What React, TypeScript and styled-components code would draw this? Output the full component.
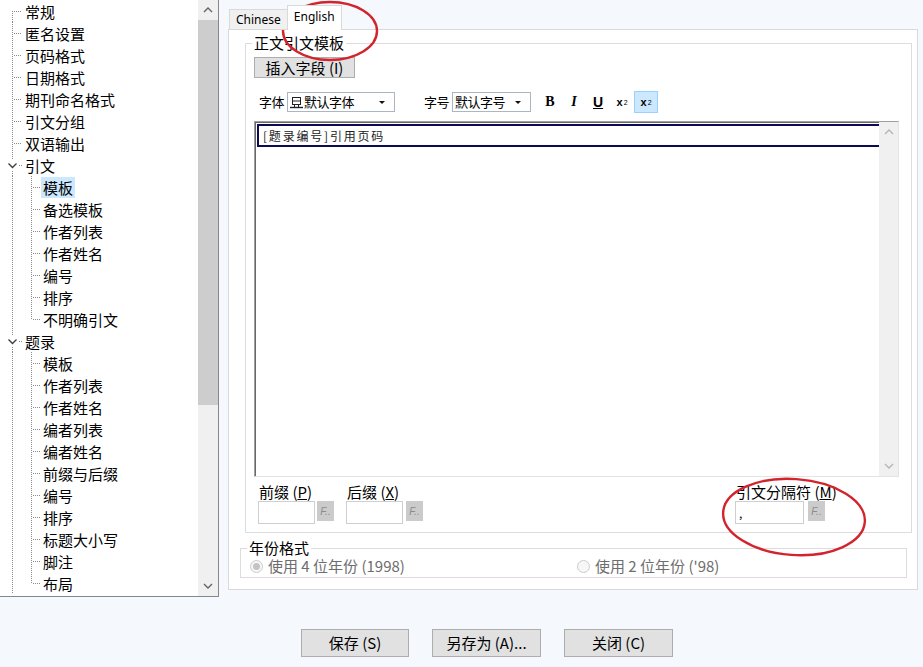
import React from 'react'
import styled, { createGlobalStyle } from 'styled-components'

const GlobalStyle = createGlobalStyle`
  html, body {
    margin: 0;
    padding: 0;
    background: #f5f8fc;
  }
  body {
    font-family: 'Noto Sans CJK SC', 'Noto Sans', sans-serif;
    color: #000;
  }
  * {
    box-sizing: border-box;
  }
`

interface ITreeNode {
    label: string,
    children?: string[],
}

interface ITreeRow {
    label: string,
    level: 0 | 1,
    first?: boolean,
    last?: boolean,
    expander?: boolean,
    selected?: boolean,
}

const treeData: ITreeNode[] = [
    { label: '常规' },
    { label: '匿名设置' },
    { label: '页码格式' },
    { label: '日期格式' },
    { label: '期刊命名格式' },
    { label: '引文分组' },
    { label: '双语输出' },
    { label: '引文', children: ['模板', '备选模板', '作者列表', '作者姓名', '编号', '排序', '不明确引文'] },
    { label: '题录', children: ['模板', '作者列表', '作者姓名', '编者列表', '编者姓名', '前缀与后缀', '编号', '排序', '标题大小写', '脚注', '布局'] },
]

const treeRows: ITreeRow[] = []
treeData.forEach((node, i) => {
    treeRows.push({ label: node.label, level: 0, first: i === 0, expander: !!node.children })
    const kids = node.children ?? []
    kids.forEach((kid, j) => {
        treeRows.push({
            label: kid,
            level: 1,
            last: j === kids.length - 1,
            selected: node.label === '引文' && j === 0,
        })
    })
})

const Connector = ({ row }: { row: ITreeRow }) => {
    const w = row.level === 0 ? 23 : 41
    return (
        <Guide width={w} height={22} viewBox={`0 0 ${w} 22`}>
            {row.level === 0 && !row.expander && (
                <>
                    <line x1="12.5" y1={row.first ? 11 : 0} x2="12.5" y2="22" />
                    <line x1="14" y1="11.5" x2="22" y2="11.5" />
                </>
            )}
            {row.level === 0 && row.expander && (
                <>
                    <line x1="12.5" y1="0" x2="12.5" y2="6" />
                    <line x1="12.5" y1="17" x2="12.5" y2="22" />
                    <line x1="19" y1="11.5" x2="22" y2="11.5" />
                    <path className="chevron" d="M8.5 9.5 L12.5 13.5 L16.5 9.5" />
                </>
            )}
            {row.level === 1 && (
                <>
                    <line x1="12.5" y1="0" x2="12.5" y2="22" />
                    <line x1="31.5" y1="0" x2="31.5" y2={row.last ? 12 : 22} />
                    <line x1="33" y1="11.5" x2="41" y2="11.5" />
                </>
            )}
        </Guide>
    )
}

const Arrow = ({ up, color }: { up?: boolean, color: string }) => (
    <svg width="10" height="6" viewBox="0 0 10 6">
        <path
            d={up ? 'M1 5 L5 1 L9 5' : 'M1 1 L5 5 L9 1'}
            fill="none"
            stroke={color}
            strokeWidth="1.3"
        />
    </svg>
)

// little TrueType "printer" glyph shown before the font name
const FontIcon = () => (
    <svg width="13" height="13" viewBox="0 0 13 13">
        <rect x="2.5" y="1.5" width="8" height="7" fill="none" stroke="#222" />
        <line x1="2.5" y1="5" x2="10.5" y2="5" stroke="#222" />
        <line x1="4.5" y1="8.5" x2="4.5" y2="11" stroke="#222" />
        <line x1="8.5" y1="8.5" x2="8.5" y2="11" stroke="#222" />
        <line x1="0" y1="11.5" x2="13" y2="11.5" stroke="#222" strokeWidth="1.4" />
    </svg>
)

const Caret = () => (
    <svg width="6" height="3" viewBox="0 0 6 3">
        <path d="M0 0 L6 0 L3 3 Z" fill="#111" />
    </svg>
)

const Field = ({ label, hotkey, value, inputWidth, gap }: { label: string, hotkey: string, value?: string, inputWidth: number, gap: number }) => (
    <FieldGroup>
        <FieldLabel>{label} (<u>{hotkey}</u>)</FieldLabel>
        <FieldInputs>
            <TextInput $width={inputWidth}>{value}</TextInput>
            <FormatButton $gap={gap}>F..</FormatButton>
        </FieldInputs>
    </FieldGroup>
)

export default function App() {
    return (
        <Root>
            <GlobalStyle />
            <Main>
                <TreePanel>
                    <TreeList>
                        {treeRows.map((row, i) => (
                            <TreeRow key={i}>
                                <Connector row={row} />
                                <TreeLabel $selected={row.selected}>{row.label}</TreeLabel>
                            </TreeRow>
                        ))}
                    </TreeList>
                    <ScrollBar>
                        <ScrollArrow><Arrow up color="#606060" /></ScrollArrow>
                        <ScrollTrack>
                            <ScrollThumb $size={385} />
                        </ScrollTrack>
                        <ScrollArrow><Arrow color="#606060" /></ScrollArrow>
                    </ScrollBar>
                </TreePanel>

                <RightPane>
                    <TabStrip>
                        <Tab>Chinese</Tab>
                        <Tab $active>English</Tab>
                    </TabStrip>
                    <TabPanel>
                        <Group $left={5} $bottom={8}>
                            <GroupTitle $after={5}>正文引文模板</GroupTitle>
                            <PushButton $width={101} $height={21}>插入字段 (I)</PushButton>

                            <Toolbar>
                                <ToolLabel>字体</ToolLabel>
                                <Select $width={108}>
                                    <FontIcon />
                                    <SelectText>默认字体</SelectText>
                                    <Caret />
                                </Select>
                                <ToolLabel $gap={29}>字号</ToolLabel>
                                <Select $width={79}>
                                    <SelectText>默认字号</SelectText>
                                    <Caret />
                                </Select>
                                <ToolButtons>
                                    <ToolButton>B</ToolButton>
                                    <ToolButton $italic>I</ToolButton>
                                    <ToolButton $sans><u>U</u></ToolButton>
                                    <ToolButton $sans $small>x<sub>2</sub></ToolButton>
                                    <ToolButton $sans $small $active>x<sup>2</sup></ToolButton>
                                </ToolButtons>
                            </Toolbar>

                            <Editor>
                                <EditorBody>
                                    <FieldLine>[题录编号]引用页码</FieldLine>
                                </EditorBody>
                                <ScrollBar $plain>
                                    <ScrollArrow><Arrow up color="#b4b4b4" /></ScrollArrow>
                                    <ScrollTrack />
                                    <ScrollArrow><Arrow color="#b4b4b4" /></ScrollArrow>
                                </ScrollBar>
                            </Editor>

                            <FieldRow>
                                <Field label="前缀" hotkey="P" inputWidth={57} gap={2} />
                                <Field label="后缀" hotkey="X" inputWidth={57} gap={3} />
                                <Spacer />
                                <Field label="引文分隔符" hotkey="M" value="," inputWidth={69} gap={4} />
                            </FieldRow>
                        </Group>

                        <Group $top={15} $right={5} $bottom={2}>
                            <GroupTitle>年份格式</GroupTitle>
                            <RadioRow>
                                <Radio>
                                    <RadioDot $checked />
                                    使用 4 位年份 (1998)
                                </Radio>
                                <Radio>
                                    <RadioDot />
                                    使用 2 位年份 ('98)
                                </Radio>
                            </RadioRow>
                        </Group>
                    </TabPanel>
                </RightPane>
            </Main>

            <Footer>
                <PushButton $width={108} $height={28}>保存 (S)</PushButton>
                <PushButton $width={109} $height={28}>另存为 (A)...</PushButton>
                <PushButton $width={109} $height={28}>关闭 (C)</PushButton>
            </Footer>

            <Annotations width="923" height="667" viewBox="0 0 923 667">
                <ellipse cx="330" cy="31" rx="47" ry="29" />
                <ellipse cx="794" cy="517" rx="71" ry="38" transform="rotate(4 794 517)" />
            </Annotations>
        </Root>
    )
}

const Root = styled.div`
    position: relative;
    width: 923px;
    height: 667px;
    overflow: hidden;
    background: #f5f8fc;
`

const Main = styled.div`
    display: flex;
    height: 597px;
`

const TreePanel = styled.div`
    width: 219px;
    display: flex;
    background: #fff;
    border-right: 1px solid #828790;
    border-bottom: 1px solid #828790;
`

const TreeList = styled.div`
    flex: 1;
    overflow: hidden;
`

const TreeRow = styled.div`
    display: flex;
    align-items: center;
    height: 22px;
`

const Guide = styled.svg`
    flex: none;
    shape-rendering: crispEdges;

    line {
        stroke: #8a8a8a;
        stroke-width: 1;
        stroke-dasharray: 1 1;
    }

    .chevron {
        fill: none;
        stroke: #3c3c3c;
        stroke-width: 1.3;
        shape-rendering: geometricPrecision;
    }
`

const TreeLabel = styled.span<{ $selected?: boolean }>`
    padding: 0 2px;
    font-size: 15px;
    line-height: 21px;
    white-space: nowrap;
    background: ${p => p.$selected ? '#cce8ff' : 'transparent'};
`

const ScrollBar = styled.div<{ $plain?: boolean }>`
    width: ${p => p.$plain ? 19 : 20}px;
    flex: none;
    display: flex;
    flex-direction: column;
    background: #f0f0f0;
`

const ScrollArrow = styled.div`
    height: 20px;
    display: flex;
    align-items: center;
    justify-content: center;
`

const ScrollTrack = styled.div`
    flex: 1;
`

const ScrollThumb = styled.div<{ $size: number }>`
    height: ${p => p.$size}px;
    background: #cdcdcd;
`

const RightPane = styled.div`
    flex: 1;
    padding: 5px 5px 0 9px;
`

const TabStrip = styled.div`
    position: relative;
    z-index: 1;
    display: flex;
    align-items: flex-end;
    height: 25px;
    margin-bottom: -1px;
    padding-left: 1px;
`

const Tab = styled.div<{ $active?: boolean }>`
    height: ${p => p.$active ? 25 : 21}px;
    margin-left: ${p => p.$active ? -1 : 0}px;
    padding: ${p => p.$active ? '2px 6px 0 6px' : '1px 6px 0 6px'};
    font-family: 'Noto Sans', 'Liberation Sans', sans-serif;
    font-size: 12px;
    line-height: 18px;
    background: ${p => p.$active ? '#fff' : '#f0f0f0'};
    border: 1px solid #d9d9d9;
    border-bottom: ${p => p.$active ? 'none' : '1px solid #d9d9d9'};
`

const TabPanel = styled.div`
    height: 561px;
    padding: 13px 5px 0 11px;
    background: #fff;
    border: 1px solid #d9d9d9;
`

const Group = styled.div<{ $left?: number, $right?: number, $top?: number, $bottom: number }>`
    margin: ${p => p.$top ?? 0}px ${p => p.$right ?? 0}px 0 ${p => p.$left ?? 0}px;
    padding: 0 12px ${p => p.$bottom}px 8px;
    border: 1px solid #dcdcdc;
`

// caption sits on the group's top border line
const GroupTitle = styled.div<{ $after?: number }>`
    width: fit-content;
    height: 18px;
    margin: -10px 0 ${p => p.$after ?? 0}px -2px;
    padding: 0 2px;
    font-size: 15px;
    line-height: 18px;
    background: #fff;
`

const PushButton = styled.div<{ $width: number, $height: number }>`
    width: ${p => p.$width}px;
    height: ${p => p.$height}px;
    display: flex;
    align-items: center;
    justify-content: center;
    font-size: 15px;
    line-height: 18px;
    background: #e1e1e1;
    border: 1px solid #adadad;
    white-space: nowrap;
`

const Toolbar = styled.div`
    display: flex;
    align-items: center;
    height: 22px;
    margin-top: 13px;
    padding-left: 5px;
`

const ToolLabel = styled.span<{ $gap?: number }>`
    margin-left: ${p => p.$gap ?? 0}px;
    margin-right: 3px;
    font-size: 13px;
    letter-spacing: -0.5px;
    line-height: 18px;
    white-space: nowrap;
`

const Select = styled.div<{ $width: number }>`
    width: ${p => p.$width}px;
    height: 20px;
    flex: none;
    display: flex;
    align-items: center;
    gap: 1px;
    padding: 0 9px 0 2px;
    background: #fff;
    border: 1px solid #a9b6c4;
`

const SelectText = styled.span`
    flex: 1;
    font-size: 13px;
    letter-spacing: -0.5px;
    line-height: 18px;
    white-space: nowrap;
`

const ToolButtons = styled.div`
    display: flex;
    margin-left: 7px;
`

const ToolButton = styled.span<{ $active?: boolean, $italic?: boolean, $sans?: boolean, $small?: boolean }>`
    width: 24px;
    height: 22px;
    display: flex;
    align-items: center;
    justify-content: center;
    font-family: ${p => p.$sans ? "'Liberation Sans', sans-serif" : "'Liberation Serif', serif"};
    font-size: ${p => p.$small ? 11 : 14}px;
    font-weight: bold;
    font-style: ${p => p.$italic ? 'italic' : 'normal'};
    background: ${p => p.$active ? '#cce8ff' : 'transparent'};
    border: 1px solid ${p => p.$active ? '#99d1ff' : 'transparent'};

    sub, sup {
        font-size: 7px;
        font-weight: normal;
        margin-left: 1px;
    }
`

const Editor = styled.div`
    display: flex;
    height: 356px;
    margin-top: 8px;
    background: #fff;
    border: 1px solid;
    border-color: #a0a0a0 #e3e3e3 #e3e3e3 #a0a0a0;
    box-shadow: inset 1px 1px 0 #696969;
`

const EditorBody = styled.div`
    flex: 1;
    padding: 2px 0 0 2px;
`

const FieldLine = styled.div`
    height: 23px;
    padding-left: 4px;
    font-size: 12px;
    line-height: 19px;
    letter-spacing: 1.8px;
    color: #222;
    border: 2px solid #0b0b55;
    border-right: none;
`

const FieldRow = styled.div`
    display: flex;
    gap: 12px;
    margin-top: 6px;
    padding: 0 74px 0 4px;
`

const Spacer = styled.div`
    flex: 1;
`

const FieldGroup = styled.div`
    display: flex;
    flex-direction: column;
`

const FieldLabel = styled.span`
    width: 0;
    height: 18px;
    padding-left: 1px;
    overflow: visible;
    font-size: 15px;
    line-height: 18px;
    white-space: nowrap;
`

const FieldInputs = styled.div`
    display: flex;
    align-items: flex-start;
`

const TextInput = styled.div<{ $width: number }>`
    width: ${p => p.$width}px;
    height: 23px;
    padding: 2px 0 0 3px;
    font-size: 12px;
    line-height: 18px;
    background: #fff;
    border: 1px solid #cfcfcf;
`

const FormatButton = styled.div<{ $gap: number }>`
    width: 17px;
    height: 20px;
    margin-left: ${p => p.$gap}px;
    display: flex;
    align-items: center;
    justify-content: center;
    font-family: 'Liberation Sans', sans-serif;
    font-size: 10px;
    font-style: italic;
    color: #8c8c8c;
    background: #cbcbcb;
`

const RadioRow = styled.div`
    display: grid;
    grid-template-columns: 327px auto;
    height: 18px;
    padding-left: 1px;
`

const Radio = styled.label`
    display: flex;
    align-items: center;
    gap: 5px;
    font-size: 15px;
    line-height: 18px;
    color: #6d6d6d;
    white-space: nowrap;
`

const RadioDot = styled.span<{ $checked?: boolean }>`
    width: 13px;
    height: 13px;
    flex: none;
    display: flex;
    align-items: center;
    justify-content: center;
    border-radius: 50%;
    border: 1px solid #cccccc;
    background: #f7f7f7;

    &::after {
        content: '';
        width: 7px;
        height: 7px;
        border-radius: 50%;
        background: ${p => p.$checked ? '#c4c4c4' : 'transparent'};
    }
`

const Footer = styled.div`
    display: flex;
    gap: 23px;
    padding: 32px 0 0 301px;
`

const Annotations = styled.svg`
    position: absolute;
    left: 0;
    top: 0;
    pointer-events: none;

    ellipse {
        fill: none;
        stroke: #d3232c;
        stroke-width: 2.4;
    }
`
